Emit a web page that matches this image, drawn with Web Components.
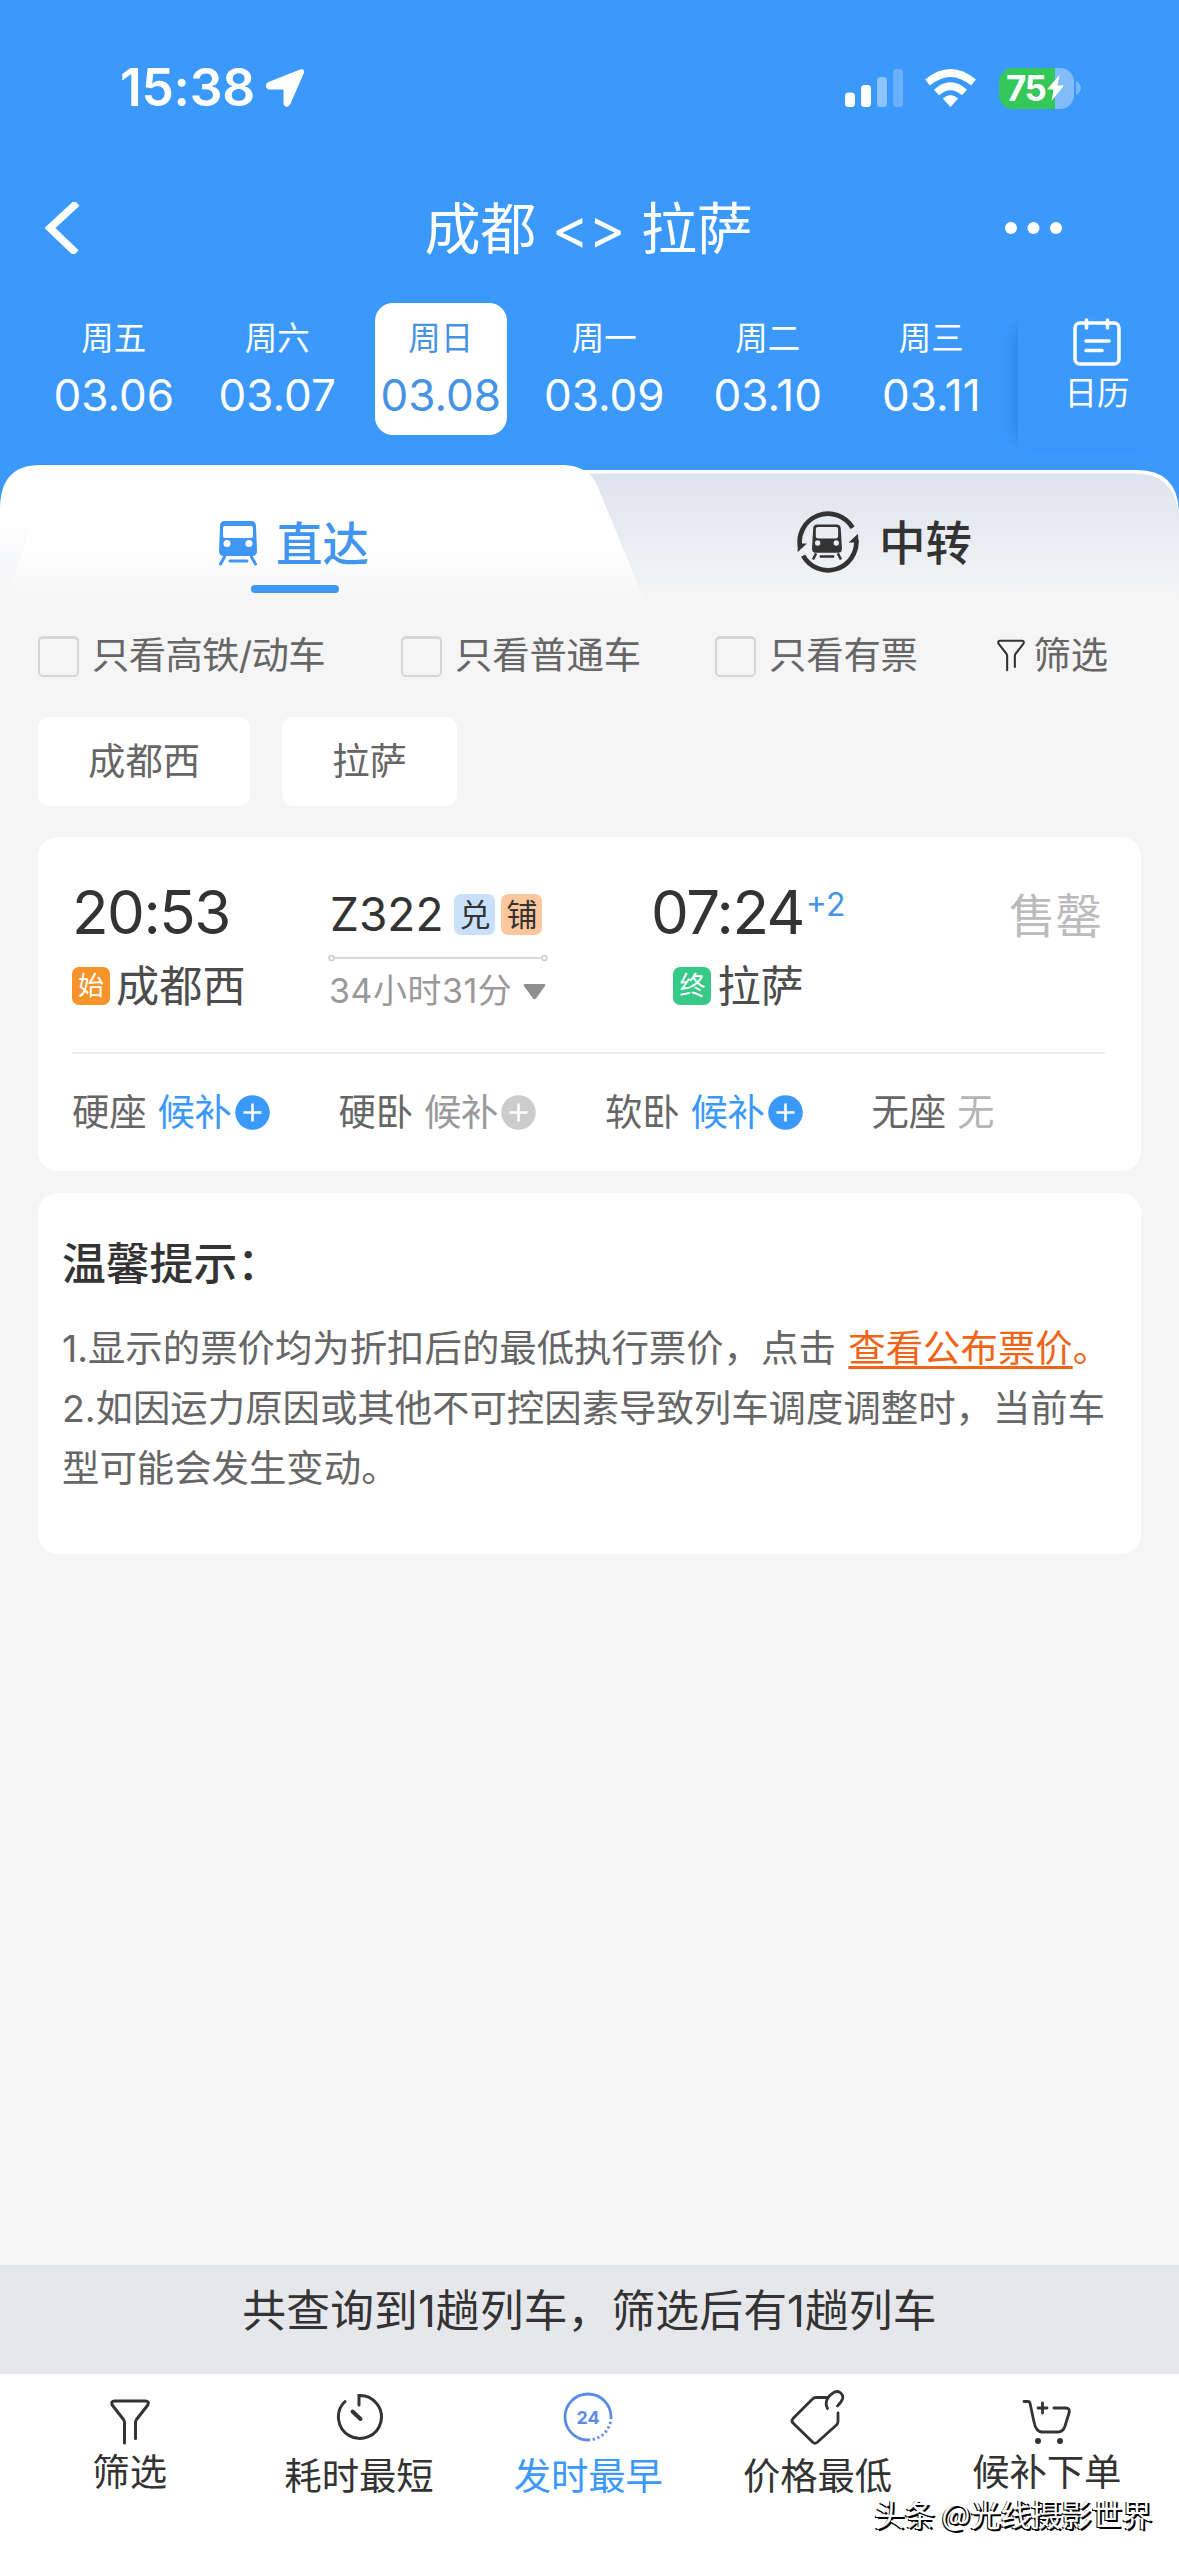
<!DOCTYPE html>
<html lang="zh-CN">
<head>
<meta charset="utf-8">
<meta name="viewport" content="width=device-width">
<title>成都 - 拉萨</title>
<style>
html, body { margin: 0; padding: 0; }
body {
  --blue: #3b99fc;
  --ink: #333;
  --page: #f5f5f5;
  width: 1179px;
  height: 2556px;
  overflow: hidden;
  background: var(--page);
  color: var(--ink);
  font-family: Inter, "Noto Sans CJK SC", sans-serif;
  font-size: 37.4px;
  line-height: 1;
}
</style>
</head>
<body>
<ticket-page>
  <status-bar slot="header" time="15:38" battery="75"></status-bar>
  <nav-bar slot="header">成都 &lt;&gt; 拉萨</nav-bar>
  <date-strip slot="header">
    <date-item week="周五" day="03.06"></date-item>
    <date-item week="周六" day="03.07"></date-item>
    <date-item week="周日" day="03.08" active></date-item>
    <date-item week="周一" day="03.09"></date-item>
    <date-item week="周二" day="03.10"></date-item>
    <date-item week="周三" day="03.11"></date-item>
  </date-strip>

  <route-tabs>
    <span slot="direct">直达</span>
    <span slot="transfer">中转</span>
  </route-tabs>
  <filter-bar>
    <check-item style="width: 363px; letter-spacing: -.7px">只看高铁/动车</check-item>
    <check-item style="width: 314px">只看普通车</check-item>
    <check-item>只看有票</check-item>
    <span slot="filter">筛选</span>
  </filter-bar>
  <station-chips>
    <station-chip>成都西</station-chip>
    <station-chip>拉萨</station-chip>
  </station-chips>
  <train-card start="20:53" end="07:24" days="+2" from="成都西" to="拉萨" code="Z322" duration="34小时31分" state="售罄">
    <seat-item name="硬座" state="候补" kind="open"></seat-item>
    <seat-item name="硬卧" state="候补" kind="closed"></seat-item>
    <seat-item name="软卧" state="候补" kind="open"></seat-item>
    <seat-item name="无座" state="无" kind="none"></seat-item>
  </train-card>
  <tips-card>
    <span slot="title">温馨提示：</span>
    <span slot="price">1.显示的票价均为折扣后的最低执行票价，点击</span>
    <span slot="link">查看公布票价</span>
    <span slot="change">2.如因运力原因或其他不可控因素导致列车调度调整时，当前车型可能会发生变动。</span>
  </tips-card>

  <result-summary slot="footer">共查询到1趟列车，筛选后有1趟列车</result-summary>
  <tool-bar slot="footer">
    <tool-item icon="funnel" high>筛选</tool-item>
    <tool-item icon="clock">耗时最短</tool-item>
    <tool-item icon="day" active>发时最早</tool-item>
    <tool-item icon="tag">价格最低</tool-item>
    <tool-item icon="cart" high>候补下单</tool-item>
  </tool-bar>
  <water-mark slot="footer">头条 @光线摄影世界</water-mark>
</ticket-page>

<script>
// shared base: every element renders a string into an open shadow root
class BaseElement extends HTMLElement {
  constructor() {
    super();
    this._shadowRoot = this.attachShadow({ mode: 'open' });
  }

  connectedCallback() {
    this._shadowRoot.innerHTML = this.render();
  }

  attr(name) {
    return this.getAttribute(name) || '';
  }
}

const ICONS = {
  funnel: `<svg width="40" height="46" viewBox="0 0 40 46" fill="none" stroke="#333" stroke-width="3" stroke-linecap="round" stroke-linejoin="round"><path d="M14.5 44V23.5Q14.5 22 13.5 20.5L2.2 6Q.8 2 4.5 2H35.5Q39.4 2 37.8 6L26.5 20.5Q25.5 22 25.5 23.5V39.5"/></svg>`,
  clock: `<svg width="48" height="48" viewBox="0 0 48 48" fill="none" stroke="#333" stroke-width="3" stroke-linecap="round"><path d="M24 12V2.5A21.5 21.5 0 1 1 10 8.5"/><path d="M17.5 18.5L25.5 26" stroke-width="4"/></svg>`,
  day: `<svg width="52" height="52" viewBox="0 0 52 52" fill="none" stroke="#5b8bea" stroke-width="2.8"><path d="M49 26A23 23 0 1 0 26 49"/><path d="M26 49A23 23 0 0 0 49 26" stroke-dasharray="2.2 2.6"/><text x="26" y="32.5" text-anchor="middle" font-family="Inter" font-size="18" font-weight="700" fill="#5b8bea" stroke="none">24</text></svg>`,
  tag: `<svg width="58" height="58" viewBox="0 0 58 58" fill="none" stroke="#333" stroke-width="2.8" stroke-linecap="round" stroke-linejoin="round"><path d="M39 9.500H27Q25 9.500 23.500 11L4 30.500Q2 33 4 35L24 54.500Q26 56 28 54.500L48 36.500Q49 35 49 33V25"/><path d="M38.500 20.500C35 14 39 8 44 5C49 1 55 6 53.500 11C52.500 14 50.500 16 48.500 18"/></svg>`,
  cart: `<svg width="50" height="46" viewBox="0 0 50 46" fill="none" stroke="#333" stroke-width="2.8" stroke-linecap="round" stroke-linejoin="round"><path d="M2 2.500H6Q7.500 2.500 8 4L12 23Q14 33 20 33H36Q41 33 43 27L47 14Q48.500 9 43.500 9H32"/><path d="M16 9H25M20.500 4V14"/><g fill="#333" stroke="none"><circle cx="16" cy="42" r="3"/><circle cx="38" cy="42" r="3"/></g></svg>`,
};

customElements.define('ticket-page', class extends BaseElement {
  render() {
    return `
<style>
:host { display: flex; flex-direction: column; height: 2556px; position: relative; }
header { background: var(--blue); color: #fff; height: 465px; }
main { flex: 1; }
</style>
<header><slot name="header"></slot></header>
<main><slot></slot></main>
<footer><slot name="footer"></slot></footer>`;
  }
});

customElements.define('status-bar', class extends BaseElement {
  render() {
    return `
<style>
:host { display: flex; align-items: center; height: 176px; padding: 0 98px 0 120px; }
.time { font-size: 51.500px; font-weight: 600; letter-spacing: -0.300px; width: 145px; white-space: nowrap; }
.gap { flex: 1; }
.signal { margin-right: 21px; }
.wifi { margin-right: 23px; }
.battery {
  display: flex; align-items: center; width: 75px; height: 41px; border-radius: 14px;
  background: linear-gradient(90deg, #34c759 56px, #83bcfb 56px);
}
.battery span { font-size: 35px; font-weight: 700; letter-spacing: -1.5px; margin-left: 7px; }
.battery svg { margin-left: 2px; }
</style>
<span class="time">${this.attr('time')}</span>
<svg width="40" height="40" viewBox="0 0 41 41"><path d="M36 1.500Q41.500 0 39.500 6L26 37Q22.500 42.500 19 37.500V23Q19 22 18 22H3.500Q-2 19 3 14.500Z" fill="#fff"/></svg>
<span class="gap"></span>
<svg class="signal" width="59" height="38" viewBox="0 0 59 38" fill="#fff">
  <rect x="0" y="23.500" width="10" height="14.500" rx="3.500"/>
  <rect x="16" y="16" width="10" height="22" rx="3.500"/>
  <rect x="32" y="8" width="10" height="30" rx="3.500" opacity=".42"/>
  <rect x="48" y="0" width="10" height="38" rx="3.500" opacity=".24"/>
</svg>
<svg class="wifi" width="51" height="38" viewBox="0 0 51 38" fill="none" stroke="#fff" stroke-width="7.500">
  <path d="M2.500 13.500Q25.500 -5.500 48.500 13.500"/><path d="M11.500 23.500Q25.500 11 39.500 23.500"/>
  <path d="M25.500 38L17.800 29.500Q25.500 22.500 33.200 29.500Z" fill="#fff" stroke="none"/>
</svg>
<div class="battery">
  <span>${this.attr('battery')}</span>
  <svg width="17" height="26" viewBox="0 0 17 26"><path d="M12.500 0L0 14.500H6.500L4.500 26L17 10.500H10.500Z" fill="#fff"/></svg>
</div>
<svg style="margin: 0 0 0 2px" width="5" height="14" viewBox="0 0 5 14"><path d="M0 0Q5 3 5 7T0 14Z" fill="#75b6fc"/></svg>`;
  }
});

customElements.define('nav-bar', class extends BaseElement {
  render() {
    return `
<style>
:host { display: grid; grid-template-columns: 200px 1fr 200px; align-items: center; height: 104px; }
.title { font-size: 56px; text-align: center; white-space: pre; letter-spacing: -0.2px; padding-top: 2px; margin-left: -2px; }
.back { margin-left: 45px; }
</style>
<svg class="back" width="36" height="52" viewBox="0 0 36 52"><path d="M32 1L5 26L31 51" fill="none" stroke="#fff" stroke-width="7.500"/></svg>
<span class="title"><slot></slot></span>
<svg width="60" height="14" viewBox="0 0 60 14" style="margin-left: 25px" fill="#fff"><circle cx="7" cy="7" r="6"/><circle cx="29.500" cy="7" r="6"/><circle cx="52" cy="7" r="6"/></svg>`;
  }
});

customElements.define('date-strip', class extends BaseElement {
  render() {
    return `
<style>
:host { display: flex; height: 185px; }
.days { display: flex; width: 986px; padding: 23px 0 0 32px; box-sizing: border-box; flex: none; }
.calendar {
  flex: 1; display: flex; flex-direction: column; align-items: center; box-sizing: border-box;
  margin: 36px 0 0 32px; height: 132px; padding: 1px 3px 0 0;
  background: var(--blue);
  box-shadow: -14px 2px 16px -12px rgba(20, 90, 190, .4);
}
.calendar span { font-size: 32.500px; line-height: 40px; margin-top: 7px; }
</style>
<div class="days"><slot></slot></div>
<div class="calendar">
  <svg width="50" height="50" viewBox="0 0 50 50" fill="none" stroke="#fff" stroke-width="3.500" stroke-linecap="round"><rect x="3" y="6" width="44" height="41" rx="5"/><path d="M14.500 3V11M35.500 3V11M14 24H37M14 33.500H30"/></svg>
  <span>日历</span>
</div>`;
  }
});

customElements.define('date-item', class extends BaseElement {
  render() {
    return `
<style>
:host { display: flex; justify-content: center; width: 163.500px; flex: none; }
.box { display: flex; flex-direction: column; align-items: center; width: 132px; height: 132px; border-radius: 18px; }
:host([active]) .box { background: #fff; color: #4593e4; }
.week { font-size: 32.500px; line-height: 40px; margin-top: 16px; }
.day { font-size: 44px; line-height: 50px; margin-top: 11px; letter-spacing: 0; }
</style>
<div class="box">
  <span class="week">${this.attr('week')}</span>
  <span class="day">${this.attr('day')}</span>
</div>`;
  }
});

customElements.define('route-tabs', class extends BaseElement {
  render() {
    return `
<style>
:host { display: grid; grid-template-columns: 590px 589px; height: 137px; }
.shape { grid-area: 1 / 1 / 2 / 3; display: block; }
.tab { grid-row: 1; display: flex; height: 157px; align-items: center; font-size: 46.500px; font-weight: 500; }
.direct { grid-column: 1; color: #4194ef; flex-direction: column; align-items: flex-start; }
.row { display: flex; align-items: center; height: 50px; margin: 53px 0 0 218px; gap: 18px; }
.line { width: 88px; height: 8px; border-radius: 4px; background: #4096f4; margin: 17px 0 0 251px; }
.transfer { grid-column: 2; align-items: flex-start; }
.transfer div { display: flex; align-items: center; height: 62px; margin: 46px 0 0 207px; gap: 20px; }
slot { display: block; padding-top: 2px; }
</style>
<svg class="shape" width="1179" height="137" viewBox="0 0 1179 137">
  <defs>
    <linearGradient id="off" x1="0" y1="0" x2="0" y2="1"><stop offset="0" stop-color="#dde4ef"/><stop offset="1" stop-color="#f5f5f5"/></linearGradient>
    <linearGradient id="on" x1="0" y1="0" x2="0" y2="1"><stop offset=".6" stop-color="#fff"/><stop offset="1" stop-color="#f5f5f5"/></linearGradient>
    <linearGradient id="side" x1="0" y1="0" x2="0" y2="1"><stop offset="0" stop-color="#fff"/><stop offset=".4" stop-color="#f7f8fa"/><stop offset="1" stop-color="#f5f5f5"/></linearGradient>
  </defs>
  <rect width="1179" height="100" fill="#3b99fc"/>
  <path d="M540 5H1137Q1179 5 1179 50V137H540Z" fill="#fff"/>
  <path d="M540 8.500H1135Q1175.500 8.500 1179 52V137H540Z" fill="url(#off)"/>
  <path d="M0 44Q0 0 40 0H560C580 0 591 7 597 20L645 137H0Z" fill="url(#on)"/>
  <path d="M0 56H34L4 137H0Z" fill="url(#side)"/>
</svg>
<div class="tab direct">
  <div class="row">
    <svg width="40" height="46" viewBox="0 0 40 46">
      <path d="M7 1H33Q38 1 38 6L39 31Q39 36 34 36H6Q1 36 1 31L2 6Q2 1 7 1Z" fill="#4096f4"/>
      <rect x="5" y="6" width="30" height="12" rx="2" fill="#fff"/>
      <circle cx="9" cy="23.500" r="3.500" fill="#fff"/><circle cx="31" cy="23.500" r="3.500" fill="#fff"/>
      <path d="M6.500 37L2.500 44M33.500 37L37.500 44M12 41H29" stroke="#4096f4" stroke-width="3" stroke-linecap="round"/>
    </svg>
    <slot name="direct"></slot>
  </div>
  <div class="line"></div>
</div>
<div class="tab transfer">
  <div>
    <svg width="62" height="62" viewBox="0 0 60 60">
      <g fill="none" stroke="#333" stroke-width="4.500"><path d="M3.200 36A27.500 27.500 0 0 1 53.800 16.200"/><path d="M5.900 43.200A27.500 27.500 0 0 0 57.400 28"/></g>
      <path d="M.5 40L9.500 31.500H1Z M59 22L50 30.500H59.500Z" fill="#333"/>
      <path d="M19.500 13H38.500Q42 13 42.300 16.500L43.500 36Q43.500 40.500 40 40.500H18Q14.500 40.500 14.500 36L15.700 16.500Q16 13 19.500 13Z" fill="#333"/>
      <rect x="18.200" y="15.500" width="21.600" height="11" rx="2" fill="#e9ecf0"/>
      <circle cx="20" cy="31" r="2.600" fill="#e9ecf0"/><circle cx="38" cy="31" r="2.600" fill="#e9ecf0"/>
      <path d="M18.500 41L15.500 47M39.500 41L42.500 47M22 44H36" stroke="#333" stroke-width="2.400"/>
    </svg>
    <slot name="transfer"></slot>
  </div>
</div>`;
  }
});

customElements.define('filter-bar', class extends BaseElement {
  render() {
    return `
<style>
:host { display: flex; align-items: center; height: 107px; padding: 0 71px 0 38px; color: #666; letter-spacing: -.2px; }
.filter { display: flex; align-items: center; margin-left: auto; gap: 9px; }
.filter svg { width: 28px; height: 33px; }
</style>
<slot></slot>
<span class="filter">${ICONS.funnel}<slot name="filter"></slot></span>`;
  }
});

customElements.define('check-item', class extends BaseElement {
  render() {
    return `
<style>
:host { display: flex; align-items: center; gap: 13px; white-space: nowrap; }
i { box-sizing: border-box; width: 41px; height: 41px; border: 2px solid #d6d6d6; border-top-width: 3px; border-radius: 5px; margin-top: 1px; }
</style>
<i></i><span><slot></slot></span>`;
  }
});

customElements.define('station-chips', class extends BaseElement {
  render() {
    return `
<style>
:host { display: flex; gap: 32px; padding: 8px 38px 31px; color: #666; }
</style>
<slot></slot>`;
  }
});

customElements.define('station-chip', class extends BaseElement {
  render() {
    return `
<style>
:host { display: block; padding: 0 50px; line-height: 89px; background: #fff; border-radius: 11px; }
</style>
<slot></slot>`;
  }
});

customElements.define('train-card', class extends BaseElement {
  render() {
    return `
<style>
:host { display: block; box-sizing: border-box; height: 334px; margin: 0 38px; padding: 0 36px 0 34px; background: #fff; border-radius: 20px; }
.top { display: grid; grid-template-columns: 257px 323px 1fr auto; height: 217px; border-bottom: 2px solid #ebebeb; box-sizing: border-box; }
.time { font-size: 60px; line-height: 60px; letter-spacing: -1.500px; color: #333; display: block; }
.start { padding-top: 45px; }
.station { display: flex; align-items: center; height: 50px; margin-top: 19px; font-size: 43.200px; color: #4c4c4c; gap: 6px; }
.mark { width: 38px; height: 38px; line-height: 38px; border-radius: 7px; text-align: center; font-size: 26px; color: #fff; background: #f7932b; }
.mark.stop { background: #36c987; }
.station span:last-child { padding-top: 2px; }
.mid { padding-top: 52px; }
.code { display: flex; align-items: center; height: 50px; font-size: 46px; padding-left: 1px; }
.badge { width: 41px; height: 41px; line-height: 41px; border-radius: 7px; font-size: 31px; text-align: center; background: #c9e0fb; margin-left: 11px; }
.badge + .badge { background: #fcc79c; margin-left: 6px; }
.mid svg { display: block; }
.rail { margin: 15px 0 0 -1px; }
.duration { display: flex; align-items: center; height: 50px; margin-top: 4px; font-size: 34px; color: #999; gap: 11px; letter-spacing: .5px; }
.end { display: grid; grid-template-columns: auto 1fr; grid-template-rows: 60px 50px; row-gap: 19px; padding-top: 45px; }
.end .time { margin-left: -1px; }
.end .station { margin: 0; justify-self: end; }
.days { font-size: 32px; color: #4694e6; line-height: 46px; margin-left: 2px; }
.state { font-size: 46.500px; line-height: 50px; color: #bbb; margin: 54px 3px 0 0; }
.seats { display: grid; grid-template-columns: repeat(4, 266.500px); height: 117px; align-items: center; }
</style>
<div class="top">
  <div class="start">
    <span class="time">${this.attr('start')}</span>
    <div class="station"><span class="mark">始</span><span>${this.attr('from')}</span></div>
  </div>
  <div class="mid">
    <div class="code"><span>${this.attr('code')}</span><span class="badge">兑</span><span class="badge">铺</span></div>
    <svg class="rail" width="220" height="8" viewBox="0 0 220 8" fill="none" stroke="#ccc" stroke-width="1.500"><circle cx="3.500" cy="4" r="2.500"/><path d="M6 4H214"/><circle cx="216.500" cy="4" r="2.500"/></svg>
    <div class="duration"><span>${this.attr('duration')}</span><svg width="23" height="17" viewBox="0 0 23 17"><path d="M2 1H21Q23 1 22 3L13 15.500Q11.500 17 10 15.500L1 3Q0 1 2 1Z" fill="#8f8f8f"/></svg></div>
  </div>
  <div class="end">
    <span class="time">${this.attr('end')}</span><span class="days">${this.attr('days')}</span>
    <div class="station"><span class="mark stop">终</span><span>${this.attr('to')}</span></div>
  </div>
  <div class="state">${this.attr('state')}</div>
</div>
<div class="seats"><slot></slot></div>`;
  }
});

customElements.define('seat-item', class extends BaseElement {
  get plus() {
    if (this.attr('kind') === 'none') return '';
    const fill = this.attr('kind') === 'open' ? '#3b99fc' : '#ccc';
    return `<svg width="35" height="35" viewBox="0 0 35 35"><circle cx="17.500" cy="17.500" r="17.300" fill="${fill}"/><path d="M8.500 17.500H26.500M17.500 8.500V26.500" stroke="#fff" stroke-width="2.600"/></svg>`;
  }

  render() {
    return `
<style>
:host { display: flex; align-items: center; color: #666; letter-spacing: -.2px; }
.state { margin: 0 3px 0 11px; color: #3b99fc; }
:host([kind="closed"]) .state { color: #999; }
:host([kind="none"]) .state { color: #b5b5b5; }
</style>
<span>${this.attr('name')}</span><span class="state">${this.attr('state')}</span>${this.plus}`;
  }
});

customElements.define('tips-card', class extends BaseElement {
  render() {
    return `
<style>
:host { display: block; box-sizing: border-box; height: 361px; margin: 22px 38px 0; padding: 47px 20px 0 24px; background: #fff; border-radius: 20px; color: #666; }
h3 { margin: 0 0 29px; font-size: 43.800px; line-height: 50px; font-weight: 500; color: #333; }
p { margin: 0 -4px 0 0; line-height: 60px; }
.nowrap { white-space: nowrap; }
.link { color: #f06418; margin-left: 2px; }
.link u { text-decoration-thickness: 3px; text-underline-offset: 4px; text-decoration-skip-ink: none; }
</style>
<h3><slot name="title"></slot></h3>
<p class="nowrap"><slot name="price"></slot> <span class="link"><u><slot name="link"></slot></u>。</span></p>
<p><slot name="change"></slot></p>`;
  }
});

customElements.define('result-summary', class extends BaseElement {
  render() {
    return `
<style>
:host { display: block; height: 109px; line-height: 94px; text-align: center; font-size: 43.800px; background: #e6e7eb; letter-spacing: .1px; }
</style>
<slot></slot>`;
  }
});

customElements.define('tool-bar', class extends BaseElement {
  render() {
    return `
<style>
:host { display: grid; grid-template-columns: repeat(5, 229.300px); height: 182px; padding: 0 15px; background: #fff; box-sizing: border-box; }
</style>
<slot></slot>`;
  }
});

customElements.define('tool-item', class extends BaseElement {
  render() {
    return `
<style>
:host { display: flex; flex-direction: column; align-items: center; }
.icon { display: flex; align-items: center; height: 50px; margin-top: 18px; }
.label { line-height: 50px; margin-top: 10px; letter-spacing: -.1px; }
:host([high]) .icon { margin-top: 23px; }
:host([high]) .label { margin-top: 1px; }
:host([active]) .label { color: #3b99fc; }
</style>
<span class="icon">${ICONS[this.attr('icon')]}</span>
<span class="label"><slot></slot></span>`;
  }
});

customElements.define('water-mark', class extends BaseElement {
  render() {
    return `
<style>
:host {
  position: absolute; right: 27px; bottom: 23px; line-height: 40px;
  font-family: "Noto Sans CJK SC", sans-serif; font-size: 30.300px; color: #fff; white-space: nowrap;
  text-shadow: 2px 2px 0 #000, -1px 1px 0 #000;
}
</style>
<slot></slot>`;
  }
});
</script>
</body>
</html>
